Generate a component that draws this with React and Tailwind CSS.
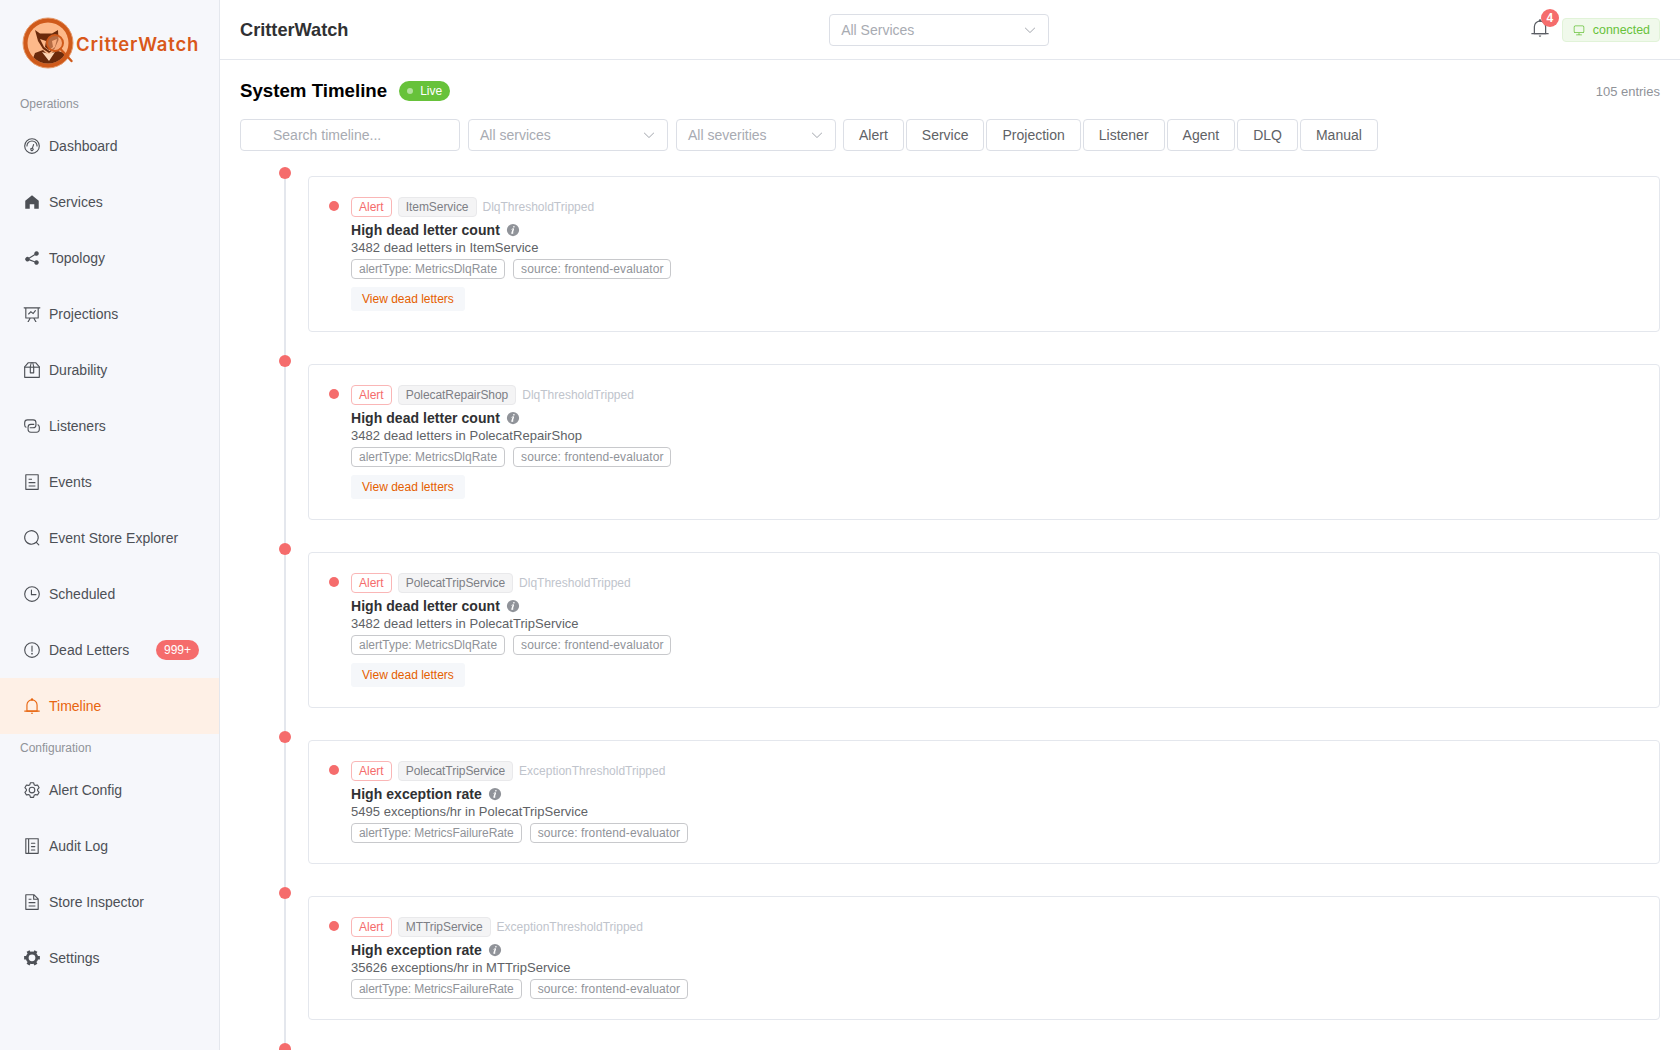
import React from "react";

// Filled icons on a 1024 box, same family the app uses
const paths = {
  odometer: [
    "M512 896a384 384 0 1 0 0-768 384 384 0 0 0 0 768m0 64a448 448 0 1 1 0-896 448 448 0 0 1 0 896",
    "M192 512a320 320 0 1 1 640 0 32 32 0 1 1-64 0 256 256 0 1 0-512 0 32 32 0 0 1-64 0",
    "M570.432 627.84A96 96 0 1 1 509.568 608l60.992-187.776A32 32 0 1 1 631.424 440l-60.992 187.776zM502.08 734.464a32 32 0 1 0 19.84-60.928 32 32 0 0 0-19.84 60.928",
  ],
  home: ["M512 128 128 447.936V896h255.936V640H640v256h255.936V447.936z"],
  share: ["m679.872 348.8-301.76 188.608a127.808 127.808 0 0 1 5.12 52.16l279.936 104.96a128 128 0 1 1-22.464 59.904l-279.872-104.96a128 128 0 1 1-16.64-166.272l301.696-188.608a128 128 0 1 1 33.92 54.272z"],
  dataLine: ["M359.168 768H160a32 32 0 0 1-32-32V192H64a32 32 0 0 1 0-64h896a32 32 0 1 1 0 64h-64v544a32 32 0 0 1-32 32H665.216l110.848 192h-73.856L591.36 768H433.024L322.176 960H248.32zM832 192H192v512h640zM342.656 534.656a32 32 0 1 1-45.312-45.312L444.992 341.76l125.44 94.08L679.04 300.032a32 32 0 1 1 49.92 39.936L581.632 524.224 451.008 426.24 342.656 534.592z"],
  box: [
    "M317.056 128 128 344.064V896h768V344.064L706.944 128zm-14.528-64h418.944a32 32 0 0 1 24.064 10.88l206.528 236.096A32 32 0 0 1 960 332.032V928a32 32 0 0 1-32 32H96a32 32 0 0 1-32-32V332.032a32 32 0 0 1 7.936-21.12L278.4 75.008a32 32 0 0 1 24.064-10.88z",
    "M64 320h896v64H64z",
    "M448 327.872V640h128V327.872L526.08 64h-28.16zM448 64h128l64 256v352a32 32 0 0 1-32 32H416a32 32 0 0 1-32-32V320z",
  ],
  connection: [
    "M640 384v64H448a128 128 0 0 0-128 128v128a128 128 0 0 0 128 128h320a128 128 0 0 0 128-128V576a128 128 0 0 0-64-110.848V394.88c74.56 26.368 128 97.472 128 181.056v128a192 192 0 0 1-192 192H448a192 192 0 0 1-192-192V576a192 192 0 0 1 192-192z",
    "M384 640v-64h192a128 128 0 0 0 128-128V320a128 128 0 0 0-128-128H256a128 128 0 0 0-128 128v128a128 128 0 0 0 64 110.848v70.272A192.064 192.064 0 0 1 64 448V320a192 192 0 0 1 192-192h320a192 192 0 0 1 192 192v128a192 192 0 0 1-192 192z",
  ],
  tickets: ["M192 128v768h640V128zm-32-64h704a32 32 0 0 1 32 32v832a32 32 0 0 1-32 32H160a32 32 0 0 1-32-32V96a32 32 0 0 1 32-32m160 448h384v64H320zm0-192h192v64H320zm0 384h384v64H320z"],
  search: ["m795.904 750.72 124.992 124.928a32 32 0 0 1-45.248 45.248L750.656 795.904a416 416 0 1 1 45.248-45.248zM480 832a352 352 0 1 0 0-704 352 352 0 0 0 0 704"],
  clock: [
    "M512 896a384 384 0 1 0 0-768 384 384 0 0 0 0 768m0 64a448 448 0 1 1 0-896 448 448 0 0 1 0 896",
    "M480 256a32 32 0 0 1 32 32v256a32 32 0 0 1-64 0V288a32 32 0 0 1 32-32",
    "M480 512h256q32 0 32 32t-32 32H480q-32 0-32-32t32-32",
  ],
  warning: ["M512 64a448 448 0 1 1 0 896 448 448 0 0 1 0-896m0 832a384 384 0 0 0 0-768 384 384 0 0 0 0 768m48-176a48 48 0 1 1-96 0 48 48 0 0 1 96 0m-48-464a32 32 0 0 1 32 32v288a32 32 0 0 1-64 0V288a32 32 0 0 1 32-32"],
  bell: [
    "M512 64a64 64 0 0 1 64 64v64H448v-64a64 64 0 0 1 64-64",
    "M256 768h512V448a256 256 0 1 0-512 0zm256-640a320 320 0 0 1 320 320v384H192V448a320 320 0 0 1 320-320",
    "M96 768h832q32 0 32 32t-32 32H96q-32 0-32-32t32-32m352 128h128a64 64 0 0 1-128 0",
  ],
  setting: ["M600.704 64a32 32 0 0 1 30.464 22.208l35.2 109.376c14.784 7.232 28.928 15.36 42.432 24.512l112.384-24.192a32 32 0 0 1 34.432 15.36L944.32 364.8a32 32 0 0 1-4.032 37.504l-77.12 85.12a357.12 357.12 0 0 1 0 49.024l77.12 85.248a32 32 0 0 1 4.032 37.504l-88.704 153.6a32 32 0 0 1-34.432 15.296L708.8 803.904c-13.44 9.088-27.648 17.28-42.368 24.512l-35.264 109.376A32 32 0 0 1 600.704 960H423.296a32 32 0 0 1-30.464-22.208L357.696 828.48a351.616 351.616 0 0 1-42.56-24.64l-112.32 24.256a32 32 0 0 1-34.432-15.36L79.68 659.2a32 32 0 0 1 4.032-37.504l77.12-85.248a357.12 357.12 0 0 1 0-48.896l-77.12-85.248A32 32 0 0 1 79.68 364.8l88.704-153.6a32 32 0 0 1 34.432-15.296l112.32 24.256c13.568-9.152 27.776-17.408 42.56-24.64l35.2-109.312A32 32 0 0 1 423.232 64H600.64zm-23.424 64H446.72l-36.352 113.088-24.512 11.968a294.113 294.113 0 0 0-34.816 20.096l-22.656 15.36-116.224-25.088-65.28 113.152 79.68 88.192-1.92 27.136a293.12 293.12 0 0 0 0 40.192l1.92 27.136-79.808 88.192 65.344 113.152 116.224-25.024 22.656 15.296a294.113 294.113 0 0 0 34.816 20.096l24.512 11.968L446.72 896h130.688l36.48-113.152 24.448-11.904a288.282 288.282 0 0 0 34.752-20.096l22.592-15.296 116.288 25.024 65.28-113.152-79.744-88.192 1.92-27.136a293.12 293.12 0 0 0 0-40.256l-1.92-27.136 79.808-88.128-65.344-113.152-116.288 24.96-22.592-15.232a287.616 287.616 0 0 0-34.752-20.096l-24.448-11.904L577.344 128zM512 320a192 192 0 1 1 0 384 192 192 0 0 1 0-384m0 64a128 128 0 1 0 0 256 128 128 0 0 0 0-256"],
  memo: [
    "M480 320h192c21.33 0 32 10.67 32 32s-10.67 32-32 32H480c-21.33 0-32-10.67-32-32s10.67-32 32-32",
    "M887.01 72.99C881.01 67 873.34 64 864 64H160c-9.34 0-17.01 3-23.01 8.99C131 78.99 128 86.66 128 96v832c0 9.34 3 17.01 8.99 23.01S150.66 960 160 960h704c9.34 0 17.01-3 23.01-8.99S896 937.34 896 928V96c0-9.34-3-17.01-8.99-23.01M192 896V128h96v768zm640 0H352V128h480z",
    "M480 512h192c21.33 0 32 10.67 32 32s-10.67 32-32 32H480c-21.33 0-32-10.67-32-32s10.67-32 32-32m0 192h192c21.33 0 32 10.67 32 32s-10.67 32-32 32H480c-21.33 0-32-10.67-32-32s10.67-32 32-32",
  ],
  document: ["M832 384H576V128H192v768h640zm-26.496-64L640 154.496V320zM160 64h480l256 256v608a32 32 0 0 1-32 32H160a32 32 0 0 1-32-32V96a32 32 0 0 1 32-32m160 448h384v64H320zm0-192h160v64H320zm0 384h384v64H320z"],
  tools: ["M764.416 254.72a351.68 351.68 0 0 1 86.336 149.184H960v192.064H850.752a351.68 351.68 0 0 1-86.336 149.312l54.72 94.72-166.272 96-54.592-94.72a352.64 352.64 0 0 1-172.48 0L371.136 936l-166.272-96 54.72-94.72a351.68 351.68 0 0 1-86.336-149.312H64v-192h109.248a351.68 351.68 0 0 1 86.336-149.312L204.8 160l166.208-96h.192l54.656 94.592a352.64 352.64 0 0 1 172.48 0L652.8 64h.128L819.2 160l-54.72 94.72zM704 499.968a192 192 0 1 0-384 0 192 192 0 0 0 384 0"],
  monitor: ["M544 768v128h192a32 32 0 1 1 0 64H288a32 32 0 1 1 0-64h192V768H192A128 128 0 0 1 64 640V256a128 128 0 0 1 128-128h640a128 128 0 0 1 128 128v384a128 128 0 0 1-128 128zM192 192a64 64 0 0 0-64 64v384a64 64 0 0 0 64 64h640a64 64 0 0 0 64-64V256a64 64 0 0 0-64-64z"],
  arrowDown: ["M831.872 340.864 512 652.672 192.128 340.864a30.592 30.592 0 0 0-42.752 0 29.12 29.12 0 0 0 0 41.6L489.664 714.24a32 32 0 0 0 44.672 0l340.288-331.712a29.12 29.12 0 0 0 0-41.728 30.592 30.592 0 0 0-42.752 0z"],
  info: ["M512 64a448 448 0 1 1 0 896.064A448 448 0 0 1 512 64m67.2 275.072c33.28 0 60.288-23.104 60.288-57.344s-27.072-57.344-60.288-57.344c-33.28 0-60.16 23.104-60.16 57.344s26.88 57.344 60.16 57.344M590.912 699.2c0-6.848 2.368-24.64 1.024-34.752l-52.608 60.544c-10.88 11.456-24.512 19.392-30.912 17.28a12.992 12.992 0 0 1-8.256-14.72l87.68-276.992c7.168-35.136-12.544-67.2-54.336-71.296-44.096 0-108.992 44.736-148.48 101.504 0 6.784-1.28 23.68.064 33.792l52.544-60.608c10.88-11.328 23.552-19.328 29.952-17.152a12.8 12.8 0 0 1 7.808 16.128L388.48 728.576c-10.048 32.256 8.96 63.872 55.04 71.04 67.84 0 107.904-43.648 147.456-100.416z"],
};

function Icon({ name, className }) {
  return (
    <svg viewBox="0 0 1024 1024" className={className} fill="currentColor">
      {paths[name].map((d) => <path key={d} d={d} />)}
    </svg>
  );
}

const operations = [
  ["Dashboard", "odometer"],
  ["Services", "home"],
  ["Topology", "share"],
  ["Projections", "dataLine"],
  ["Durability", "box"],
  ["Listeners", "connection"],
  ["Events", "tickets"],
  ["Event Store Explorer", "search"],
  ["Scheduled", "clock"],
  ["Dead Letters", "warning"],
  ["Timeline", "bell"],
];

const configuration = [
  ["Alert Config", "setting"],
  ["Audit Log", "memo"],
  ["Store Inspector", "document"],
  ["Settings", "tools"],
];

const entries = [
  { service: "ItemService", type: "DlqThresholdTripped", title: "High dead letter count", text: "3482 dead letters in ItemService", alertType: "MetricsDlqRate", action: true },
  { service: "PolecatRepairShop", type: "DlqThresholdTripped", title: "High dead letter count", text: "3482 dead letters in PolecatRepairShop", alertType: "MetricsDlqRate", action: true },
  { service: "PolecatTripService", type: "DlqThresholdTripped", title: "High dead letter count", text: "3482 dead letters in PolecatTripService", alertType: "MetricsDlqRate", action: true },
  { service: "PolecatTripService", type: "ExceptionThresholdTripped", title: "High exception rate", text: "5495 exceptions/hr in PolecatTripService", alertType: "MetricsFailureRate" },
  { service: "MTTripService", type: "ExceptionThresholdTripped", title: "High exception rate", text: "35626 exceptions/hr in MTTripService", alertType: "MetricsFailureRate" },
];

const kinds = ["Alert", "Service", "Projection", "Listener", "Agent", "DLQ", "Manual"];

function Logo() {
  return (
    <div className="h-[90px] flex items-center pl-[22px] pb-[4px] shrink-0">
      <svg viewBox="0 0 54 54" className="w-[54px] h-[54px] shrink-0">
        <defs>
          <clipPath id="logo-inner">
            <circle cx="26" cy="27" r="20.500" />
          </clipPath>
        </defs>
        <circle cx="26" cy="27" r="25" fill="#cf5a1b" stroke="#e59a6b" strokeWidth="1" />
        <circle cx="26" cy="27" r="20.500" fill="#fdb98a" />
        <g clipPath="url(#logo-inner)">
          <path d="M8 50 13 37l8-3 6 6 6-6 9 3 4 13z" fill="#6b2a0b" />
          <path d="M20 36 27 45l6-9-6 2z" fill="#fdd5b5" />
          <path d="M13 14 18 17.500h12L36 14l.5 10-4 9-5.500 4-6-4-5-8z" fill="#6b2a0b" />
          <path d="M18 23l6 2-1 6 4 3 4-3-1-6 5-2-2 8-5.500 4-5.500-4z" fill="#fdb98a" />
        </g>
        <circle cx="33" cy="27" r="8" fill="#f3a274" fillOpacity="0.55" stroke="#cf5a1b" strokeWidth="2" />
        <path d="m38.500 33 11 12" stroke="#cf5a1b" strokeWidth="2.400" strokeLinecap="round" />
      </svg>
      <span className="font-['Inter',sans-serif] font-semibold text-[18.500px] tracking-[0.8px] leading-none text-[#d9581a] mt-[3px]">CritterWatch</span>
    </div>
  );
}

function MenuItem({ label, icon }) {
  const active = label === "Timeline";
  return (
    <div className={`h-[56px] flex items-center pl-[20px] pr-[20px] text-[14px] ${active ? "bg-[#fef0e6] text-[#e8650f]" : "text-[#4d5056]"}`}>
      <span className="w-[24px] flex justify-center mr-[5px]">
        <Icon name={icon} className="w-[18px] h-[18px]" />
      </span>
      <span className="flex-1">{label}</span>
      {label === "Dead Letters" && (
        <span className="h-[20px] px-[8px] flex items-center rounded-full bg-[#f56c6c] text-white text-[12px]">999+</span>
      )}
    </div>
  );
}

function SectionLabel({ children }) {
  return <div className="h-[28px] pl-[20px] flex items-center text-[12px] text-[#909399]">{children}</div>;
}

function Sidebar() {
  return (
    <aside className="w-[220px] shrink-0 h-full bg-[#f6f7fb] border-r border-[#e4e7ed] flex flex-col">
      <Logo />
      <SectionLabel>Operations</SectionLabel>
      {operations.map(([label, icon]) => <MenuItem key={label} label={label} icon={icon} />)}
      <SectionLabel>Configuration</SectionLabel>
      {configuration.map(([label, icon]) => <MenuItem key={label} label={label} icon={icon} />)}
    </aside>
  );
}

function Select({ label, width }) {
  return (
    <div className={`h-[32px] ${width} shrink-0 bg-white border border-[#dcdfe6] rounded-[4px] pl-[11px] pr-[11px] flex items-center justify-between text-[14px] text-[#a8abb2]`}>
      <span>{label}</span>
      <Icon name="arrowDown" className="w-[14px] h-[14px] text-[#a8abb2]" />
    </div>
  );
}

function TopBar() {
  return (
    <header className="h-[60px] shrink-0 border-b border-[#e4e7ed] pl-[20px] pr-[20px] pt-[1px] flex items-center justify-between">
      <div className="text-[18.200px] font-bold text-[#303133] pt-[1px]">CritterWatch</div>
      <Select label="All Services" width="w-[220px]" />
      <div className="flex items-center gap-[12px]">
        <div className="relative w-[20px] h-[20px] mb-[4px] text-[#5b5e64]">
          <Icon name="bell" className="w-[20px] h-[20px]" />
          <span className="absolute -top-[9px] left-[11px] w-[18px] h-[18px] rounded-full bg-[#f56c6c] text-white text-[12px] font-bold flex items-center justify-center">4</span>
        </div>
        <div className="h-[24px] pl-[10px] pr-[9px] flex items-center gap-[8px] rounded-[4px] bg-[#f0f9eb] border border-[#e1f3d8] text-[#67c23a] text-[12.400px]">
          <Icon name="monitor" className="w-[12px] h-[12px]" />
          <span>connected</span>
        </div>
      </div>
    </header>
  );
}

function Rail() {
  return (
    <div className="w-[46px] shrink-0 relative">
      <div className="absolute left-[22px] top-0 bottom-0 w-[2px] bg-[#e4e7ed]" />
      <div className="absolute left-[17px] top-0 w-[12px] h-[12px] rounded-full bg-[#f56c6c]" />
    </div>
  );
}

function TimelineCard({ entry }) {
  const failure = entry.alertType === "MetricsFailureRate";
  return (
    <div className="flex pl-[22px]">
      <Rail />
      <div className="flex-1 pt-[9px] pb-[23px]">
        <div className="border border-[#e4e7ed] rounded-[4px] bg-white p-[20px] flex">
          <div className="w-[10px] h-[10px] rounded-full bg-[#f56c6c] mt-[4px] mr-[12px] shrink-0" />
          <div className="flex-1 flex flex-col items-start">
            <div className="flex items-center h-[20px] gap-[6px] text-[12px]">
              <span className="h-[20px] px-[7px] flex items-center rounded-[4px] border border-[#fab6b6] text-[#f56c6c] bg-white">Alert</span>
              <span className="h-[20px] px-[7px] flex items-center rounded-[4px] border border-[#e9e9eb] text-[#7d7f85] bg-[#f4f4f5] tracking-[-0.05px]">{entry.service}</span>
              <span className="text-[#c0c4cc]">{entry.type}</span>
            </div>
            <div className="mt-[3px] h-[20px] flex items-center gap-[6px] text-[14px] font-bold tracking-[0.05px] text-[#303133]">
              {entry.title}
              <Icon name="info" className="w-[14px] h-[14px] text-[#909399]" />
            </div>
            <div className="h-[15px] leading-[15px] text-[13px] tracking-[0.03px] text-[#606266]">{entry.text}</div>
            <div className="mt-[4px] flex gap-[8px] text-[12px] text-[#909399]">
              <span className={`h-[20px] px-[7px] flex items-center rounded-[4px] border border-[#c8c9cc] ${failure ? "tracking-[-0.07px]" : ""}`}>alertType: {entry.alertType}</span>
              <span className="h-[20px] px-[7px] flex items-center rounded-[4px] border border-[#c8c9cc] tracking-[0.09px]">source: frontend-evaluator</span>
            </div>
            {entry.action && (
              <div className="mt-[8px] h-[24px] px-[11px] flex items-center rounded-[3px] bg-[#f5f7fa] text-[12px] text-[#e56000]">View dead letters</div>
            )}
          </div>
        </div>
      </div>
    </div>
  );
}

export default function App() {
  return (
    <div className="h-screen w-full overflow-hidden flex bg-white font-['Liberation_Sans',Arial,sans-serif]">
      <Sidebar />
      <main className="flex-1 min-w-0 flex flex-col h-full">
        <TopBar />
        <div className="flex-1 overflow-hidden pl-[20px] pr-[20px] pt-[17px]">
          <div className="h-[28px] flex items-center justify-between">
            <div className="flex items-center gap-[12px]">
              <h1 className="text-[18.700px] font-bold text-black pt-[1px]">System Timeline</h1>
              <span className="h-[20px] w-[51px] pl-[8px] flex items-center gap-[7px] rounded-full bg-[#67c23a] text-white text-[12px]">
                <span className="w-[6px] h-[6px] rounded-full bg-[#b3e19d]" />
                Live
              </span>
            </div>
            <span className="text-[13px] text-[#909399] pt-[1px]">105 entries</span>
          </div>
          <div className="mt-[14px] flex items-center">
            <div className="h-[32px] w-[220px] shrink-0 border border-[#dcdfe6] rounded-[4px] pl-[32px] flex items-center text-[14px] text-[#a8abb2]">Search timeline...</div>
            <div className="ml-[8px]"><Select label="All services" width="w-[200px]" /></div>
            <div className="ml-[8px]"><Select label="All severities" width="w-[160px]" /></div>
            <div className="ml-[7px] flex gap-[2px]">
              {kinds.map((kind) => (
                <div key={kind} className="h-[32px] px-[15px] flex items-center border border-[#dcdfe6] rounded-[4px] text-[14px] text-[#606266]">{kind}</div>
              ))}
            </div>
          </div>
          <div className="mt-[16px]">
            {entries.map((entry, i) => <TimelineCard key={i} entry={entry} />)}
            <div className="flex pl-[22px] h-[40px]"><Rail /></div>
          </div>
        </div>
      </main>
    </div>
  );
}
